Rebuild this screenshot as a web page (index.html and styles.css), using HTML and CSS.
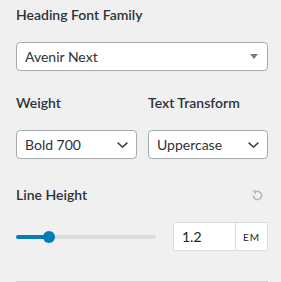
FILE: index.html
```html
<!DOCTYPE html>
<html>
<head>
<meta charset="utf-8">
<link rel="stylesheet" href="styles.css">
</head>
<body>
<div class="panel">
  <div class="field">
    <div class="label">Heading Font Family</div>
    <div class="select">
      <span>Avenir Next</span>
      <svg class="tri" width="8" height="5" viewBox="0 0 8 5"><path d="M0 0h8L4 5z" fill="#7a7a7a"/></svg>
    </div>
  </div>
  <div class="row">
    <div class="col">
      <div class="label">Weight</div>
      <div class="select">
        <span>Bold 700</span>
        <svg class="chev" width="11" height="6" viewBox="0 0 11 6"><path d="M0.6 0.6l4.9 4.5 4.9-4.5" fill="none" stroke="#3c434a" stroke-width="1.5"/></svg>
      </div>
    </div>
    <div class="col">
      <div class="label">Text Transform</div>
      <div class="select">
        <span>Uppercase</span>
        <svg class="chev" width="11" height="6" viewBox="0 0 11 6"><path d="M0.6 0.6l4.9 4.5 4.9-4.5" fill="none" stroke="#3c434a" stroke-width="1.5"/></svg>
      </div>
    </div>
  </div>
  <div class="field lh">
    <div class="label-row">
      <div class="label">Line Height</div>
      <svg class="reset" width="11" height="11" viewBox="0 0 11 11"><path d="M2.4 2.5A4.2 4.2 0 1 1 1.3 5.5" fill="none" stroke="#b4b6b9" stroke-width="1.5"/><path d="M0.3 0.6L4.2 0.6 3.7 4.4z" fill="#b4b6b9"/></svg>
    </div>
    <div class="slider-row">
      <div class="slider">
        <div class="track"></div>
        <div class="fill"></div>
        <div class="thumb"></div>
      </div>
      <div class="num">
        <span class="val">1.2</span>
        <span class="unit">EM</span>
      </div>
    </div>
  </div>
  <div class="divider"></div>
</div>
</body>
</html>
```
FILE: styles.css
```css
html, body {
  margin: 0;
  padding: 0;
  background: #f0f0f1;
}
body {
  font-family: Lato, "Noto Sans", sans-serif;
  color: #1d2327;
}
.panel {
  padding: 5px 13px 0 16px;
  display: flex;
  flex-direction: column;
}
.label {
  font-size: 14px;
  font-weight: 600;
  color: #2c3338;
  line-height: 20px;
}
.select {
  box-sizing: border-box;
  height: 29px;
  margin-top: 17px;
  background: #fff;
  border: 1px solid #a7aaad;
  border-radius: 4px;
  display: flex;
  align-items: center;
  justify-content: space-between;
  padding: 0 8px 0 8px;
  font-size: 14px;
  color: #2c3338;
}
.tri { margin-right: 1px; }
.row {
  display: grid;
  grid-template-columns: 121px 120px;
  column-gap: 11px;
  margin-top: 22px;
}
.lh { margin-top: 26px; }
.label-row {
  display: flex;
  justify-content: space-between;
  align-items: center;
}
.reset { margin-right: 5px; }
.slider-row {
  display: flex;
  align-items: center;
  justify-content: space-between;
  margin-top: 17px;
}
.slider {
  position: relative;
  width: 140px;
  height: 12px;
}
.track {
  position: absolute;
  left: 0; right: 0; top: 4px;
  height: 4px;
  border-radius: 2px;
  background: #dcdcde;
}
.fill {
  position: absolute;
  left: 0; top: 4px;
  width: 33px;
  height: 4px;
  border-radius: 2px;
  background: #007cba;
}
.thumb {
  position: absolute;
  left: 27px; top: 0;
  width: 12px; height: 12px;
  border-radius: 50%;
  background: #007cba;
}
.num {
  box-sizing: border-box;
  width: 95px;
  height: 29px;
  background: #fff;
  border: 1px solid #dcdcde;
  border-radius: 2px;
  display: flex;
  align-items: stretch;
}
.val {
  flex: 1;
  display: flex;
  align-items: center;
  padding-left: 8px;
  font-size: 14px;
  color: #1d2327;
}
.unit {
  width: 31px;
  border-left: 1px solid #dcdcde;
  display: flex;
  align-items: center;
  justify-content: center;
  font-size: 10px;
  letter-spacing: 1px;
  color: #1d2327;
}
.divider {
  margin-top: 30px;
  height: 1px;
  background: #d0d0d3;
}
```
